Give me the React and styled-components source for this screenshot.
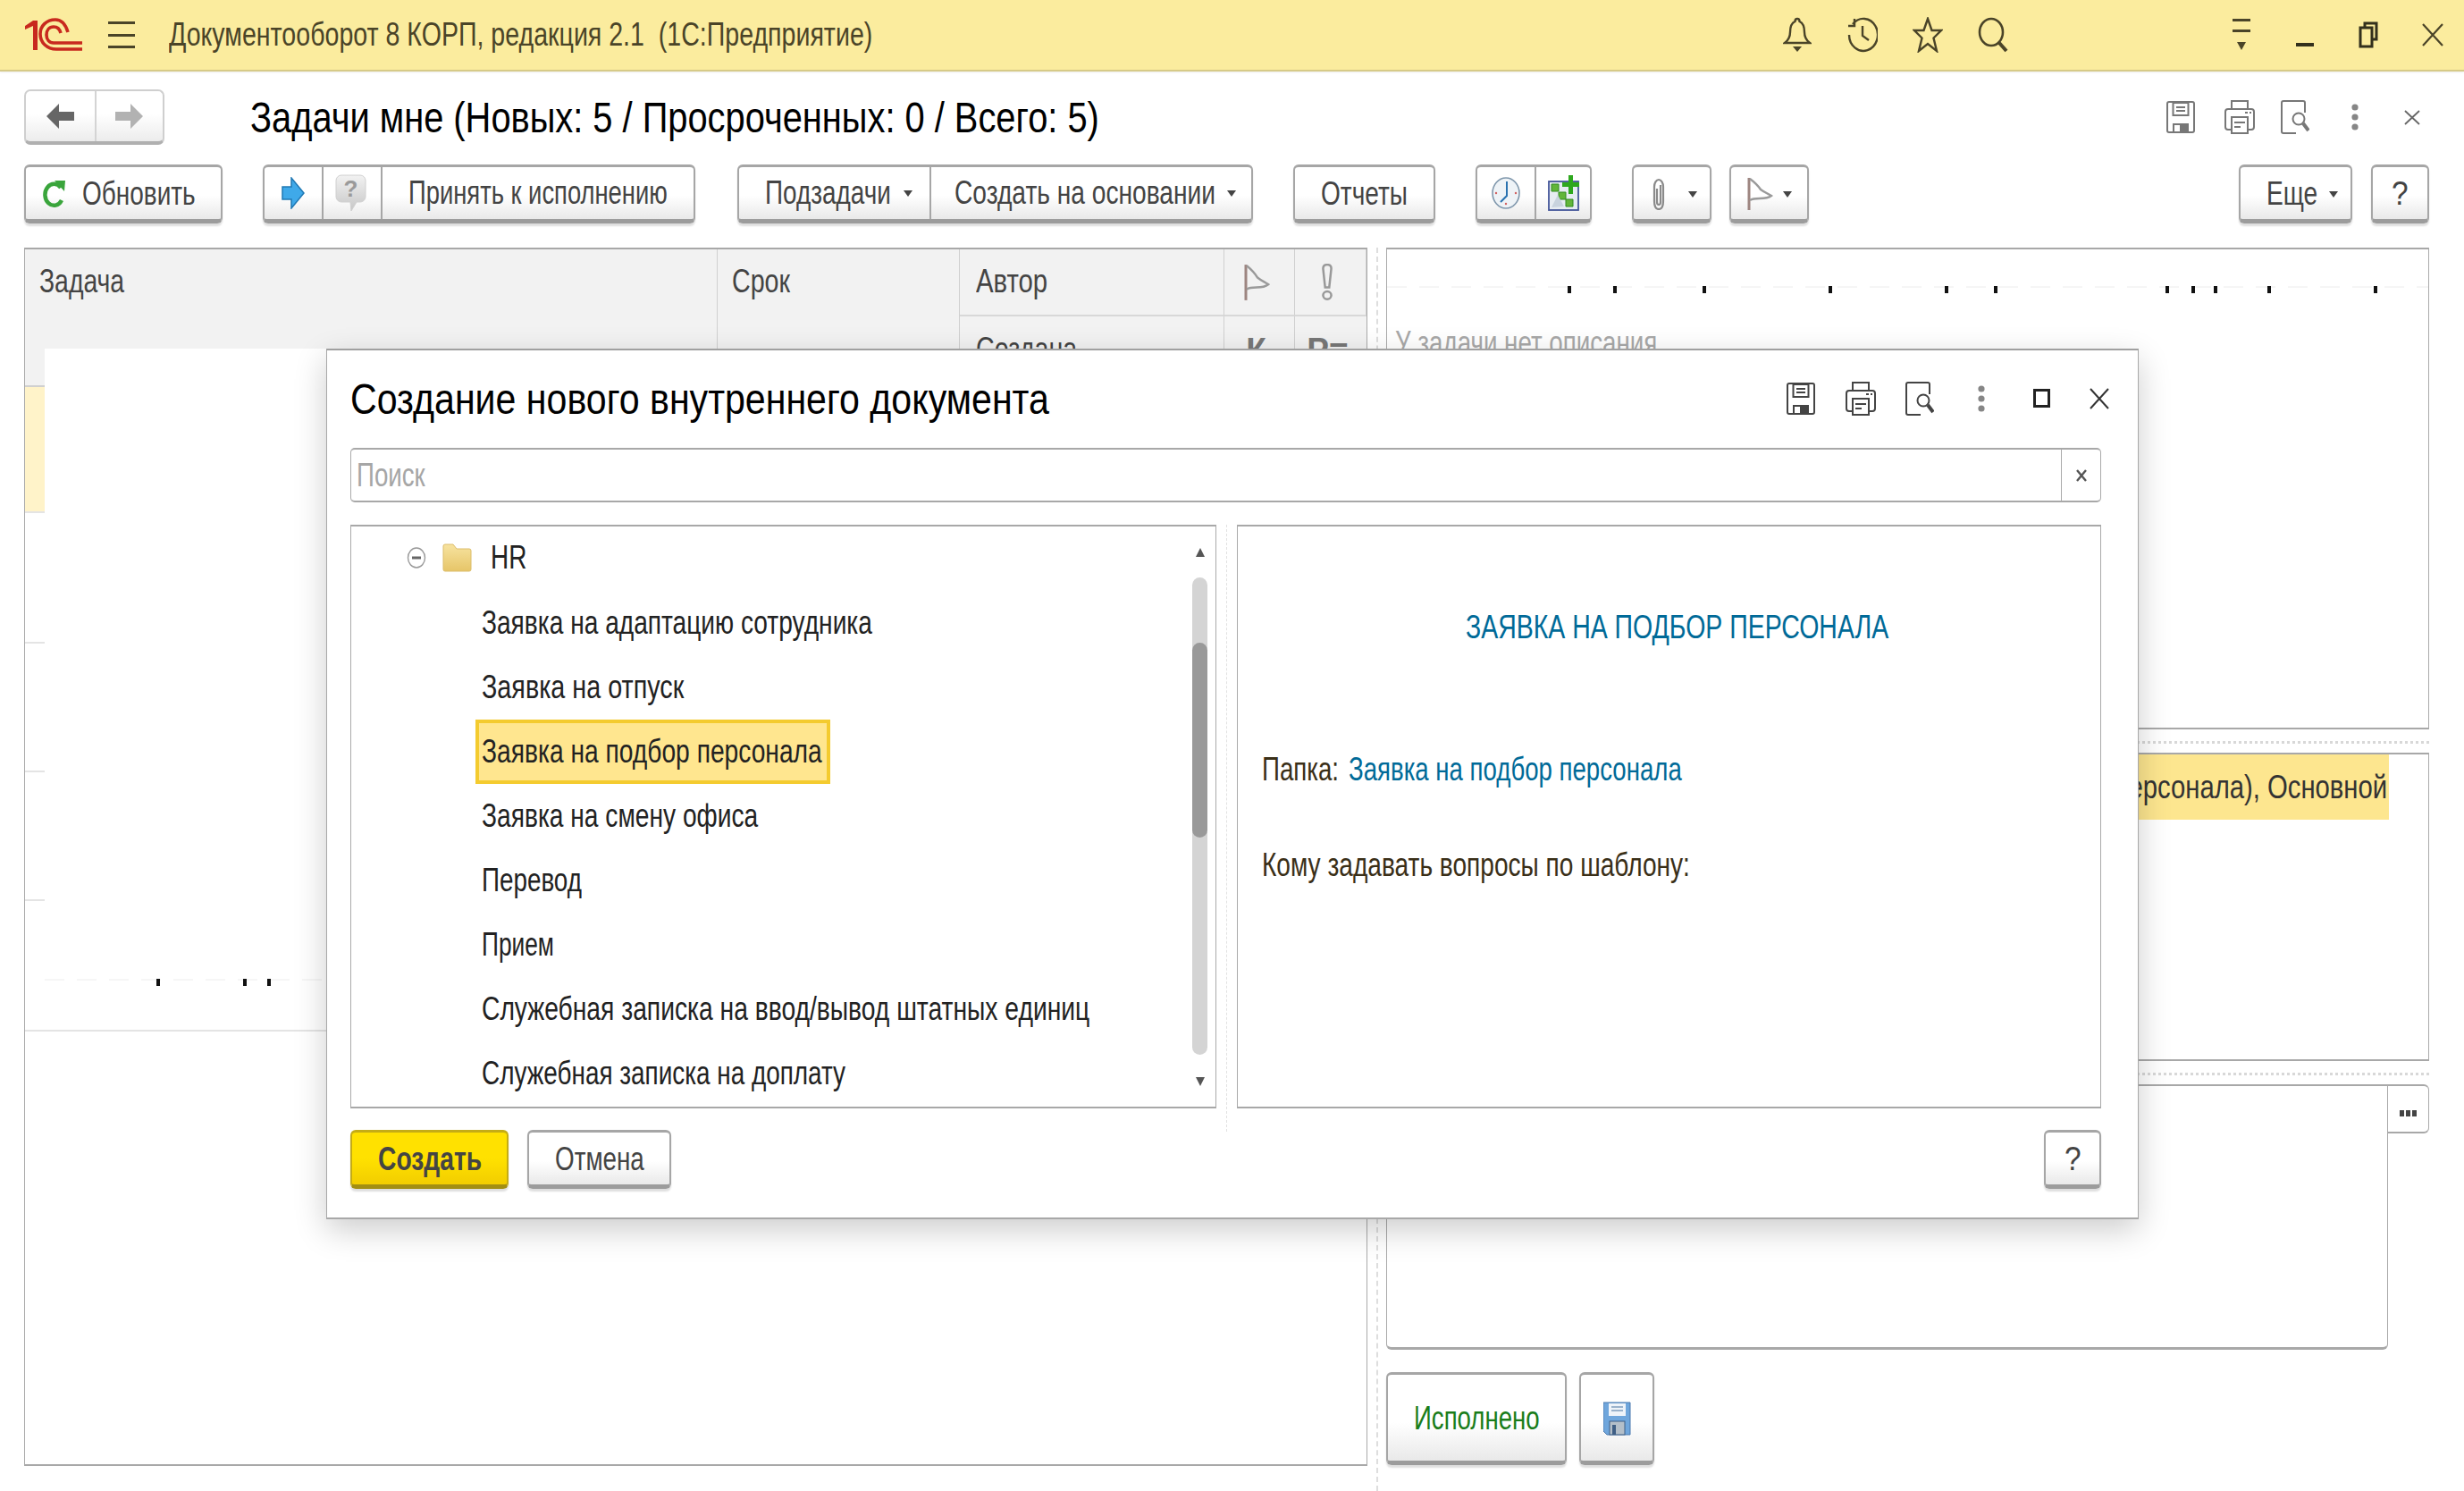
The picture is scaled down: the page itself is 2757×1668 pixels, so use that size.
import React, { useLayoutEffect, useRef } from 'react';
import styled, { createGlobalStyle } from 'styled-components';

const Global = createGlobalStyle`
  html, body { margin: 0; padding: 0; background: #fff; }
  * { box-sizing: border-box; }
  body { font-family: "Liberation Sans", Arial, sans-serif; }
`;

const FitBox = styled.span`
  display: inline-block;
  flex: none;
  width: ${p => p.$w}px;
  white-space: nowrap;
`;
const FitInner = styled.span`
  display: inline-block;
  transform-origin: left center;
`;
function Fit({ w, children }) {
  const r = useRef(null);
  useLayoutEffect(() => {
    r.current.style.transform = `scaleX(${w / r.current.offsetWidth})`;
  }, [w]);
  return <FitBox $w={w}><FitInner ref={r}>{children}</FitInner></FitBox>;
}

const Root = styled.div`
  position: relative;
  width: 2757px;
  height: 1668px;
  overflow: hidden;
  background: #fff;
`;
const TopBar = styled.header`
  display: flex;
  align-items: center;
  height: 80px;
  padding-left: 28px;
  background: #fbec9e;
  border-bottom: 2px solid #d6ca88;
  box-shadow: 0 1px 2px rgba(0,0,0,.08);
  font-size: 36px;
  color: #4a4428;
`;
const Burger = styled.div`
  display: flex;
  flex-direction: column;
  justify-content: space-between;
  width: 30px;
  height: 30px;
  margin: 0 38px 0 29px;
  i { display: block; height: 3px; background: #4a4428; }
`;
const BarIcons = styled.div`
  display: flex;
  margin-left: auto;
`;
const Slot = styled.div`
  display: flex;
  align-items: center;
  justify-content: center;
  width: ${p => p.$w || 73}px;
  height: 60px;
`;
const WinIcons = styled.div`
  display: flex;
  margin-left: 206px;
  width: 285px;
`;
const Form = styled.main`
  padding: 20px 39px 0 27px;
`;
const TitleRow = styled.div`
  display: flex;
  align-items: center;
  height: 62px;
`;
const NavGroup = styled.div`
  display: flex;
  width: 157px;
  height: 62px;
  border: 2px solid #cfcfcf;
  border-bottom: 4px solid #b0b0b0;
  border-radius: 7px;
  background: linear-gradient(#fff 45%, #ececec);
`;
const NavCell = styled.div`
  display: flex;
  align-items: center;
  justify-content: center;
  width: 50%;
  & + & { border-left: 2px solid #d4d4d4; }
`;
const PageTitle = styled.h1`
  margin: 0 0 0 96px;
  font-size: 48px;
  font-weight: 400;
  color: #000;
`;
const RightIcons = styled.div`
  display: flex;
  align-items: center;
  margin-left: auto;
  margin-right: 10px;
`;
const Gap = styled.span`
  display: inline-flex;
  margin-left: ${p => p.$ml || 0}px;
`;
const Toolbar = styled.div`
  display: flex;
  height: 66px;
  margin-top: 22px;
  font-size: 37px;
  color: #444;
`;
const Btn = styled.div`
  display: flex;
  flex: none;
  align-items: center;
  justify-content: ${p => p.$start ? 'flex-start' : 'center'};
  width: ${p => p.$w}px;
  height: ${p => p.$h || 66}px;
  margin-left: ${p => p.$auto ? 'auto' : (p.$ml || 0) + 'px'};
  padding-top: 2px;
  padding-left: ${p => p.$pl || 0}px;
  border: 2px solid #a6a6a6;
  border-top-width: 3px;
  border-bottom: 5px solid #9c9c9c;
  border-radius: 6px;
  background: linear-gradient(#fff 55%, #e9e9e9);
  box-shadow: 0 3px 2px rgba(0,0,0,.13);
  color: ${p => p.$color || '#444'};
`;
const Cell = styled.div`
  display: flex;
  align-items: center;
  justify-content: ${p => p.$start ? 'flex-start' : 'center'};
  flex: ${p => p.$w ? 'none' : 1};
  width: ${p => p.$w ? p.$w + 'px' : 'auto'};
  height: calc(100% + 2px);
  margin-top: -2px;
  padding-left: ${p => p.$pl || 0}px;
  padding-right: ${p => p.$pr || 0}px;
  & + & { border-left: 2px solid #a6a6a6; }
`;
const Caret = styled.i`
  display: block;
  flex: none;
  width: 0;
  height: 0;
  margin-left: ${p => p.$ml || 14}px;
  border-left: 5px solid transparent;
  border-right: 5px solid transparent;
  border-top: 7px solid #444;
`;
const Content = styled.div`
  display: flex;
  margin-top: 27px;
  height: 1391px;
`;
const Table = styled.section`
  position: relative;
  flex: none;
  width: 1503px;
  height: 1363px;
  overflow: hidden;
  border: 1px solid #aaa;
  border-top: 2px solid #a8a8a8;
  border-bottom: 2px solid #a8a8a8;
`;
const THead = styled.div`
  display: grid;
  grid-template-columns: 775px 271px 296px 79px 1fr;
  grid-template-rows: 75px 77px;
  background: #f2f2f2;
  border-bottom: 2px solid #d0d0d0;
  font-size: 37px;
  color: #444;
`;
const Th = styled.div`
  display: flex;
  align-items: ${p => p.$top ? 'flex-start' : 'center'};
  justify-content: ${p => p.$center ? 'center' : 'flex-start'};
  grid-row: ${p => p.$span ? '1 / 3' : 'auto'};
  padding: ${p => p.$top ? '15px 0 0 16px' : p.$center ? '0 7px 0 0' : '0 0 2px 18px'};
  border-right: 1px solid #d0d0d0;
  border-bottom: ${p => p.$span ? 'none' : '2px solid #d8d8d8'};
  font-weight: ${p => p.$bold ? 700 : 400};
  color: ${p => p.$bold ? '#777' : '#444'};
  &:last-child { border-right: none; }
`;
const Tr = styled.div`
  height: ${p => p.$h}px;
  background: ${p => p.$on ? '#fff3c9' : '#fff'};
  border-bottom: 2px solid #e4e4e4;
`;
const Patch = styled.div`
  position: absolute;
  left: 22px;
  top: 111px;
  width: 320px;
  height: 762px;
  padding-top: 705px;
  background: #fff;
`;
const VSplit = styled.div`
  flex: none;
  width: 21px;
  display: flex;
  justify-content: center;
  &::before { content: ""; display: block; border-left: 2px dashed #dedede; height: 100%; }
`;
const Side = styled.aside`
  display: flex;
  flex: none;
  flex-direction: column;
  width: 1167px;
`;
const Panel = styled.div`
  height: ${p => p.$h}px;
  overflow: hidden;
  padding-top: ${p => p.$pt || 0}px;
  border: 1px solid #aaa;
  border-top: 2px solid #a8a8a8;
  border-bottom: 2px solid #a8a8a8;
`;
const NoDesc = styled.div`
  margin-top: 35px;
  padding-left: 9px;
  font-size: 37px;
  line-height: 40px;
  color: #a8a8a8;
`;
const Marked = styled.div`
  display: flex;
  align-items: center;
  justify-content: flex-end;
  height: 73px;
  margin-right: 44px;
  padding-right: 2px;
  background: #fde68f;
  font-size: 37px;
  color: #333;
`;
const HDots = styled.div`
  height: 26px;
  padding-top: 13px;
  &::before { content: ""; display: block; border-top: 3px dotted #d8d8d8; }
`;
const NotesRow = styled.div`
  display: flex;
  align-items: flex-start;
  height: 297px;
`;
const Notes = styled.div`
  flex: 1;
  height: 297px;
  border: 1px solid #aaa;
  border-top: 2px solid #a8a8a8;
  border-bottom: 3px solid #a8a8a8;
  border-radius: 0 0 6px 6px;
`;
const More = styled.div`
  display: flex;
  align-items: flex-end;
  justify-content: center;
  width: 46px;
  height: 55px;
  padding-bottom: 17px;
  border: 1px solid #aaa;
  border-left: none;
  border-top: 2px solid #a8a8a8;
  border-bottom: 2px solid #a8a8a8;
  border-radius: 0 6px 6px 0;
  i { width: 5px; height: 7px; margin: 0 1px; background: #444; }
`;
const Actions = styled.div`
  display: flex;
  gap: 14px;
  margin-top: 25px;
  font-size: 37px;
`;
const Modal = styled.section`
  position: absolute;
  left: 365px;
  top: 390px;
  display: flex;
  flex-direction: column;
  width: 2028px;
  height: 974px;
  padding: 0 41px 0 26px;
  background: #fff;
  border: 1px solid #a8a8a8;
  border-top: 2px solid #a0a0a0;
  border-bottom: 2px solid #a8a8a8;
  box-shadow: 0 12px 34px rgba(0,0,0,.2);
`;
const ModalHead = styled.div`
  display: flex;
  align-items: center;
  height: 109px;
  margin-right: -9px;
`;
const ModalTitle = styled.h2`
  margin: 0;
  font-size: 48px;
  font-weight: 400;
  color: #000;
`;
const ModalIcons = styled.div`
  display: flex;
  align-items: center;
  margin-left: auto;
  margin-bottom: 2px;
`;
const Search = styled.div`
  display: flex;
  height: 61px;
  border: 1px solid #aaa;
  border-top: 2px solid #a8a8a8;
  border-bottom: 2px solid #a8a8a8;
  border-radius: 5px;
`;
const SearchField = styled.div`
  display: flex;
  flex: 1;
  align-items: center;
  padding-left: 6px;
  font-size: 37px;
  color: #a6a6a6;
`;
const SearchClear = styled.div`
  display: flex;
  align-items: center;
  justify-content: center;
  width: 44px;
  border-left: 1px solid #aaa;
`;
const Panes = styled.div`
  display: flex;
  margin-top: 25px;
  height: 653px;
`;
const TreePane = styled.div`
  position: relative;
  width: 969px;
  overflow: hidden;
  border: 1px solid #aaa;
  border-top: 2px solid #a8a8a8;
  border-bottom: 2px solid #a8a8a8;
  font-size: 37px;
  color: #222;
`;
const Row = styled.div`
  display: flex;
  align-items: center;
  height: 72px;
  padding-left: ${p => p.$pl}px;
  padding-bottom: ${p => p.$pb || 0}px;
`;
const Chip = styled.div`
  display: flex;
  align-items: center;
  height: 72px;
  width: ${p => p.$w}px;
  padding-left: ${p => p.$on ? 3 : 7}px;
  background: ${p => p.$on ? '#ffe68f' : 'transparent'};
  border: ${p => p.$on ? '4px solid #f4cb2f' : 'none'};
`;
const Track = styled.div`
  position: absolute;
  left: 941px;
  top: 57px;
  width: 17px;
  height: 534px;
  padding-top: 73px;
  border-radius: 9px;
  background: #d4d4d4;
`;
const Thumb = styled.div`
  height: 218px;
  border-radius: 9px;
  background: #999;
`;
const Tri = styled.i`
  position: absolute;
  left: 945px;
  top: ${p => p.$top}px;
  width: 0;
  height: 0;
  border-left: 5px solid transparent;
  border-right: 5px solid transparent;
  ${p => p.$up ? 'border-bottom: 10px solid #555;' : 'border-top: 10px solid #555;'}
`;
const PaneGap = styled.div`
  display: flex;
  justify-content: center;
  width: 23px;
  &::before { content: ""; display: block; height: 104%; border-left: 1px dashed #e2e2e2; }
`;
const InfoPane = styled.div`
  flex: 1;
  padding: 0 0 0 27px;
  border: 1px solid #aaa;
  border-top: 2px solid #a8a8a8;
  border-bottom: 2px solid #a8a8a8;
  font-size: 37px;
  color: #3a2f18;
`;
const InfoHead = styled.div`
  display: flex;
  justify-content: center;
  margin: 89px 0 0 -10px;
  color: #006a98;
  line-height: 48px;
`;
const InfoLine = styled.div`
  display: flex;
  align-items: center;
  gap: 11px;
  height: 48px;
  margin-top: ${p => p.$mt}px;
`;
const Link = styled.span`
  display: inline-flex;
  color: #006a98;
`;
const Footer = styled.div`
  display: flex;
  margin-top: 24px;
  font-size: 37px;
`;
const YellowBtn = styled(Btn)`
  background: linear-gradient(#ffe100 50%, #f2cd00);
  border-color: #c4ac16;
  border-bottom-color: #a28e12;
  font-weight: 700;
`;

/* ------- icons ------- */
const Logo = () => (
  <svg width="64" height="38" viewBox="0 0 64 38" fill="none">
    <path d="M0 9 9 3h5v33H9V9L0 13Z" fill="#c8291e" />
    <path d="M48 16C45 6 40 2 34 2 24 2 17 9 17 18c0 10 8 17 18 17h29" stroke="#c8291e" strokeWidth="3.600" />
    <path d="M40 17c-1-4-4-7-8-7-5 0-8 4-8 9s3 9 8 9h32" stroke="#c8291e" strokeWidth="3.600" />
  </svg>
);
const Bell = () => (
  <svg width="32" height="40" viewBox="0 0 32 40" fill="none" stroke="#4a4428" strokeWidth="2.400">
    <path d="M16 2c-1.500 0-2.500 1-2.500 3C9 7 8 12 8 17c0 5-2 9-6 12h28c-4-3-6-7-6-12 0-5-1-10-5.500-12 0-2-1-3-2.500-3Z" />
    <path d="M11 33h10l-5 6Z" fill="#4a4428" stroke="none" />
  </svg>
);
const Hist = () => (
  <svg width="34" height="40" viewBox="0 0 34 40" fill="none" stroke="#4a4428" strokeWidth="2.400">
    <path d="M6 8A16 18 0 1 1 2 20" />
    <path d="M1 10h7V2" strokeWidth="2.400" />
    <path d="M17 10v11l7 5" />
  </svg>
);
const Star = () => (
  <svg width="34" height="40" viewBox="0 0 34 40" fill="none" stroke="#4a4428" strokeWidth="2.400">
    <path d="M17 2l4.500 13H32l-8.500 8.500L27 38l-10-8-10 8 3.500-14.500L2 15h10.500Z" />
  </svg>
);
const Loupe = () => (
  <svg width="34" height="40" viewBox="0 0 34 40" fill="none" stroke="#4a4428" strokeWidth="2.600">
    <ellipse cx="15" cy="17" rx="13" ry="15" />
    <path d="M24 29l8 9" strokeWidth="4" />
  </svg>
);
const MenuDown = () => (
  <svg width="22" height="36" viewBox="0 0 22 36" fill="#4a4428">
    <rect x="1" y="0" width="20" height="3" />
    <rect x="1" y="12" width="20" height="3" />
    <path d="M6 26h10l-5 9Z" />
  </svg>
);
const Minimize = () => (
  <svg width="22" height="36" viewBox="0 0 22 36"><rect x="1" y="27" width="20" height="4" fill="#33301c" /></svg>
);
const Restore = () => (
  <svg width="22" height="30" viewBox="0 0 22 30" fill="none" stroke="#33301c" strokeWidth="3">
    <rect x="2" y="7" width="13" height="21" />
    <path d="M7 6V2h13v18h-4" />
  </svg>
);
const X = ({ w = 24, h = 26, c = '#4a4428', sw = 2.200 }) => (
  <svg width={w} height={h} viewBox={`0 0 ${w} ${h}`} fill="none" stroke={c} strokeWidth={sw}><path d={`M1 1L${w - 1} ${h - 1}M${w - 1} 1L1 ${h - 1}`} /></svg>
);
const Floppy = ({ c = '#444' }) => (
  <svg width="32" height="36" viewBox="0 0 32 36" fill="none" stroke={c} strokeWidth="2">
    <path d="M3 1h26a2 2 0 0 1 2 2v30a2 2 0 0 1-2 2H3a2 2 0 0 1-2-2V3a2 2 0 0 1 2-2Z" />
    <rect x="7.500" y="2" width="17" height="14" />
    <path d="M11 7h10M11 11h10" />
    <rect x="8" y="26" width="16" height="9" />
    <rect x="15" y="27" width="8" height="8" fill={c} stroke="none" />
  </svg>
);
const Printer = ({ c = '#444' }) => (
  <svg width="34" height="38" viewBox="0 0 34 38" fill="none" stroke={c} strokeWidth="2">
    <path d="M8 33H4a3 3 0 0 1-3-3V13a3 3 0 0 1 3-3h26a3 3 0 0 1 3 3v17a3 3 0 0 1-3 3h-4" />
    <path d="M8 10V1h18v9" />
    <rect x="8" y="19" width="18" height="18" fill="#fff" />
    <path d="M11 25h12M11 30h7M23 14h3M28 14h2" />
  </svg>
);
const Preview = ({ c = '#444' }) => (
  <svg width="32" height="38" viewBox="0 0 32 38" fill="none" stroke={c} strokeWidth="2">
    <path d="M27 14V3a2 2 0 0 0-2-2H3a2 2 0 0 0-2 2v32a2 2 0 0 0 2 2h14" />
    <circle cx="20" cy="21" r="6.500" />
    <path d="M25 26l6 8" strokeWidth="4" />
  </svg>
);
const VDots = () => (
  <svg width="8" height="30" viewBox="0 0 8 30" fill="#868686"><circle cx="4" cy="4" r="3.600" /><circle cx="4" cy="15" r="3.600" /><circle cx="4" cy="26" r="3.600" /></svg>
);
const Square = () => (
  <svg width="19" height="21" viewBox="0 0 19 21" fill="none" stroke="#222" strokeWidth="3"><rect x="1.500" y="1.500" width="16" height="18" /></svg>
);
const ArrowL = ({ c }) => (
  <svg width="31" height="28" viewBox="0 0 31 28" fill={c}><path d="M0 14L14 0v9h17v10H14v9Z" /></svg>
);
const ArrowR = ({ c }) => (
  <svg width="31" height="28" viewBox="0 0 31 28" fill={c}><path d="M31 14L17 0v9H0v10h17v9Z" /></svg>
);
const Refresh = () => (
  <svg width="26" height="32" viewBox="0 0 26 32" fill="none">
    <path d="M21 9A10 12 0 1 0 22 23" stroke="#3aa53c" strokeWidth="4.500" />
    <path d="M14 1l12 0-1 12Z" fill="#3aa53c" />
  </svg>
);
const BlueArrow = () => (
  <svg width="26" height="36" viewBox="0 0 26 36"><path d="M1 11h10V1l14 17-14 17V25H1Z" fill="#3fa9e9" stroke="#1f78b4" strokeWidth="1.500" /></svg>
);
const Bubble = () => (
  <svg width="35" height="42" viewBox="0 0 35 42">
    <defs><linearGradient id="bg" x1="0" y1="0" x2="0" y2="1"><stop offset="0" stopColor="#f2f2f2" /><stop offset="1" stopColor="#c6c6c6" /></linearGradient></defs>
    <path d="M7 1h21a6 6 0 0 1 6 6v18a6 6 0 0 1-6 6h-4l-6 10-1-10H7a6 6 0 0 1-6-6V7a6 6 0 0 1 6-6Z" fill="url(#bg)" stroke="#d0d0d0" />
    <text x="17.500" y="25" textAnchor="middle" fontSize="26" fontWeight="700" fontFamily="Liberation Sans" fill="#9a9a9a">?</text>
  </svg>
);
const Clock = () => (
  <svg width="32" height="36" viewBox="0 0 32 36" fill="none">
    <ellipse cx="16" cy="18" rx="15" ry="17" fill="#eef3f7" stroke="#8098ad" strokeWidth="1.600" />
    <path d="M17 5l0 16-7 7" stroke="#2a72b0" strokeWidth="2" />
    <circle cx="5" cy="18" r="1.200" fill="#d06060" /><circle cx="27" cy="18" r="1.200" fill="#d06060" /><circle cx="16" cy="30" r="1.200" fill="#d06060" />
  </svg>
);
const Plan = () => (
  <svg width="35" height="40" viewBox="0 0 35 40">
    <rect x="1" y="7" width="33" height="32" fill="#e6ecf2" stroke="#44569a" strokeWidth="1.800" />
    <path d="M4 10h8v8H4zM12 19h8v8h-8zM20 27h8v8h-8z" fill="#62b53a" stroke="#2f8a1e" />
    <path d="M4 36l7-14 7 13Z" fill="#c8d3de" />
    <path d="M23 0h5v8h7v5h-7v8h-5v-8h-7V8h7Z" fill="#2ea81e" />
  </svg>
);
const Clip = () => (
  <svg width="14" height="36" viewBox="0 0 14 36" fill="none" stroke="#8a8a8a" strokeWidth="2.200">
    <path d="M12 10a5 8 0 0 0-10 0v16c0 6 2 9 5 9s5-3 5-9Z" />
    <path d="M5 12v15c0 2 .5 3 2 3s2-1 2-3V8" />
  </svg>
);
const Flag = ({ h = 38 }) => (
  <svg width="30" height={h} viewBox="0 0 30 38" preserveAspectRatio="none" fill="none">
    <path d="M3 1v36" stroke="#9d8580" strokeWidth="3" />
    <path d="M4 2c4 3 8 6 12 12 4 3 9 5 12 7-4 3-9 3-13 3-4 0-8 0-11 2" stroke="#9a9a9a" strokeWidth="2.400" />
  </svg>
);
const Excl = () => (
  <svg width="16" height="42" viewBox="0 0 14 38" preserveAspectRatio="none" fill="none" stroke="#999" strokeWidth="2.200">
    <path d="M7 1c-3 0-4 2-4 4l2 19h4l2-19c0-2-1-4-4-4Z" />
    <circle cx="7" cy="32" r="4" />
  </svg>
);
const BlueSave = () => (
  <svg width="31" height="38" viewBox="0 0 31 38">
    <path d="M0 1h30v36H4l-4-4Z" fill="#6fa6dc" stroke="#4a78ad" />
    <rect x="6" y="2" width="19" height="14" fill="#eef3f9" />
    <path d="M9 6h13M9 10h13" stroke="#9ab2cc" strokeWidth="2" />
    <rect x="7" y="22" width="17" height="15" fill="#b4bfc9" stroke="#3f5f85" />
    <rect x="10" y="26" width="4" height="11" fill="#3f5f85" />
  </svg>
);
const Expander = () => (
  <svg width="22" height="24" viewBox="0 0 22 24" fill="none" stroke="#999" strokeWidth="1.400">
    <ellipse cx="11" cy="12" rx="9.500" ry="11" />
    <path d="M6 12h10" stroke="#666" strokeWidth="3" />
  </svg>
);
const Folder = () => (
  <svg width="33" height="32" viewBox="0 0 33 32">
    <defs><linearGradient id="fg" x1="0" y1="0" x2="0" y2="1"><stop offset="0" stopColor="#f7e3a0" /><stop offset="1" stopColor="#e6c568" /></linearGradient></defs>
    <path d="M1 3a2 2 0 0 1 2-2h9l4 5h14a2 2 0 0 1 2 2v21a2 2 0 0 1-2 2H3a2 2 0 0 1-2-2Z" fill="url(#fg)" stroke="#dcbd6a" />
  </svg>
);
const Stubs = ({ w, marks }) => (
  <svg width={w} height="9" viewBox={`0 0 ${w} 9`} style={{ display: 'block' }}>
    <line x1="0" y1="1" x2={w} y2="1" stroke="#ececec" strokeWidth="1" strokeDasharray="22 14" />
    {marks.map(x => <rect key={x} x={x} y="0" width="4" height="8" fill="#111" />)}
  </svg>
);

const items = [
  ['Заявка на адаптацию сотрудника', 437],
  ['Заявка на отпуск', 226],
  ['Заявка на подбор персонала', 381, true],
  ['Заявка на смену офиса', 309],
  ['Перевод', 112],
  ['Прием', 81],
  ['Служебная записка на ввод/вывод штатных единиц', 680],
  ['Служебная записка на доплату', 407],
];

export default function App() {
  return (
    <Root>
      <Global />
      <TopBar>
        <Logo />
        <Burger><i /><i /><i /></Burger>
        <Fit w={787}>Документооборот 8 КОРП, редакция 2.1&nbsp;&nbsp;(1С:Предприятие)</Fit>
        <BarIcons>
          <Slot><Bell /></Slot>
          <Slot><Hist /></Slot>
          <Slot><Star /></Slot>
          <Slot><Loupe /></Slot>
        </BarIcons>
        <WinIcons>
          <Slot $w={71}><MenuDown /></Slot>
          <Slot $w={71}><Minimize /></Slot>
          <Slot $w={72}><Restore /></Slot>
          <Slot $w={71}><X /></Slot>
        </WinIcons>
      </TopBar>
      <Form>
        <TitleRow>
          <NavGroup>
            <NavCell><ArrowL c="#666" /></NavCell>
            <NavCell><ArrowR c="#b2b2b2" /></NavCell>
          </NavGroup>
          <PageTitle><Fit w={950}>Задачи мне (Новых: 5 / Просроченных: 0 / Всего: 5)</Fit></PageTitle>
          <RightIcons>
            <Floppy c="#777" />
            <Gap $ml={33}><Printer c="#777" /></Gap>
            <Gap $ml={29}><Preview c="#777" /></Gap>
            <Gap $ml={47}><VDots /></Gap>
            <Gap $ml={51}><X w={18} h={17} c="#666" sw={1.800} /></Gap>
          </RightIcons>
        </TitleRow>
        <Toolbar>
          <Btn $w={222} $start $pl={18}><Refresh /><Gap $ml={19}><Fit w={127}>Обновить</Fit></Gap></Btn>
          <Btn $w={484} $ml={45}>
            <Cell $w={64}><BlueArrow /></Cell>
            <Cell $w={66} $pr={4}><Bubble /></Cell>
            <Cell><Fit w={290}>Принять к исполнению</Fit></Cell>
          </Btn>
          <Btn $w={577} $ml={47}>
            <Cell $w={213} $start $pl={29}><Fit w={141}>Подзадачи</Fit><Caret /></Cell>
            <Cell $start $pl={26}><Fit w={292}>Создать на основании</Fit><Caret $ml={13} /></Cell>
          </Btn>
          <Btn $w={159} $ml={45}><Fit w={97}>Отчеты</Fit></Btn>
          <Btn $w={130} $ml={45}>
            <Cell $w={64}><Clock /></Cell>
            <Cell><Plan /></Cell>
          </Btn>
          <Btn $w={89} $ml={45} $pl={6}><Clip /><Caret $ml={26} /></Btn>
          <Btn $w={89} $ml={20}><Flag /><Caret $ml={11} /></Btn>
          <Btn $w={127} $auto $start $pl={29}><Fit w={57}>Еще</Fit><Caret $ml={13} /></Btn>
          <Btn $w={65} $ml={21}><Fit w={19}>?</Fit></Btn>
        </Toolbar>
        <Content>
          <Table>
            <THead>
              <Th $span $top><Fit w={95}>Задача</Fit></Th>
              <Th $span $top><Fit w={65}>Срок</Fit></Th>
              <Th><Fit w={80}>Автор</Fit></Th>
              <Th $center><Flag h={42} /></Th>
              <Th $center><Excl /></Th>
              <Th><Fit w={113}>Создана</Fit></Th>
              <Th $center $bold>К</Th>
              <Th $center $bold>Р=</Th>
            </THead>
            <Tr $on $h={141} />
            <Tr $h={146} />
            <Tr $h={144} />
            <Tr $h={144} />
            <Tr $h={146} />
            <Patch><Stubs w={320} marks={[125, 222, 249]} /></Patch>
          </Table>
          <VSplit />
          <Side>
            <Panel $h={539} $pt={41}>
              <Stubs w={1165} marks={[202, 253, 353, 494, 624, 679, 871, 900, 925, 985, 1104]} />
              <NoDesc><Fit w={293}>У задачи нет описания</Fit></NoDesc>
            </Panel>
            <HDots />
            <Panel $h={345}>
              <Marked><Fit w={555}>Заявка на подбор персонала), Основной</Fit></Marked>
            </Panel>
            <HDots />
            <NotesRow>
              <Notes />
              <More><i /><i /><i /></More>
            </NotesRow>
            <Actions>
              <Btn $w={202} $h={104} $color="#1a7d1a"><Fit w={141}>Исполнено</Fit></Btn>
              <Btn $w={84} $h={104}><BlueSave /></Btn>
            </Actions>
          </Side>
        </Content>
      </Form>
      <Modal>
        <ModalHead>
          <ModalTitle><Fit w={782}>Создание нового внутреннего документа</Fit></ModalTitle>
          <ModalIcons>
            <Floppy />
            <Gap $ml={34}><Printer /></Gap>
            <Gap $ml={33}><Preview /></Gap>
            <Gap $ml={49}><VDots /></Gap>
            <Gap $ml={54}><Square /></Gap>
            <Gap $ml={44}><X w={22} h={24} c="#333" sw={2} /></Gap>
          </ModalIcons>
        </ModalHead>
        <Search>
          <SearchField><Fit w={77}>Поиск</Fit></SearchField>
          <SearchClear><X w={12} h={14} c="#555" sw={2.400} /></SearchClear>
        </Search>
        <Panes>
          <TreePane>
            <Row $pl={62} $pb={3}>
              <Expander />
              <Gap $ml={18}><Folder /></Gap>
              <Gap $ml={21}><Fit w={40}>HR</Fit></Gap>
            </Row>
            {items.map(([t, w, on]) => (
              <Row key={t} $pl={139}>
                <Chip $on={on} $w={on ? 397 : w + 7}><Fit w={w}>{t}</Fit></Chip>
              </Row>
            ))}
            <Track><Thumb /></Track>
            <Tri $up $top={24} />
            <Tri $top={616} />
          </TreePane>
          <PaneGap />
          <InfoPane>
            <InfoHead><Fit w={473}>ЗАЯВКА НА ПОДБОР ПЕРСОНАЛА</Fit></InfoHead>
            <InfoLine $mt={111}><Fit w={86}>Папка:</Fit><Link><Fit w={373}>Заявка на подбор персонала</Fit></Link></InfoLine>
            <InfoLine $mt={59}><Fit w={479}>Кому задавать вопросы по шаблону:</Fit></InfoLine>
          </InfoPane>
        </Panes>
        <Footer>
          <YellowBtn $w={177}><Fit w={116}>Создать</Fit></YellowBtn>
          <Btn $w={161} $ml={21}><Fit w={100}>Отмена</Fit></Btn>
          <Btn $w={64} $auto><Fit w={19}>?</Fit></Btn>
        </Footer>
      </Modal>
    </Root>
  );
}
